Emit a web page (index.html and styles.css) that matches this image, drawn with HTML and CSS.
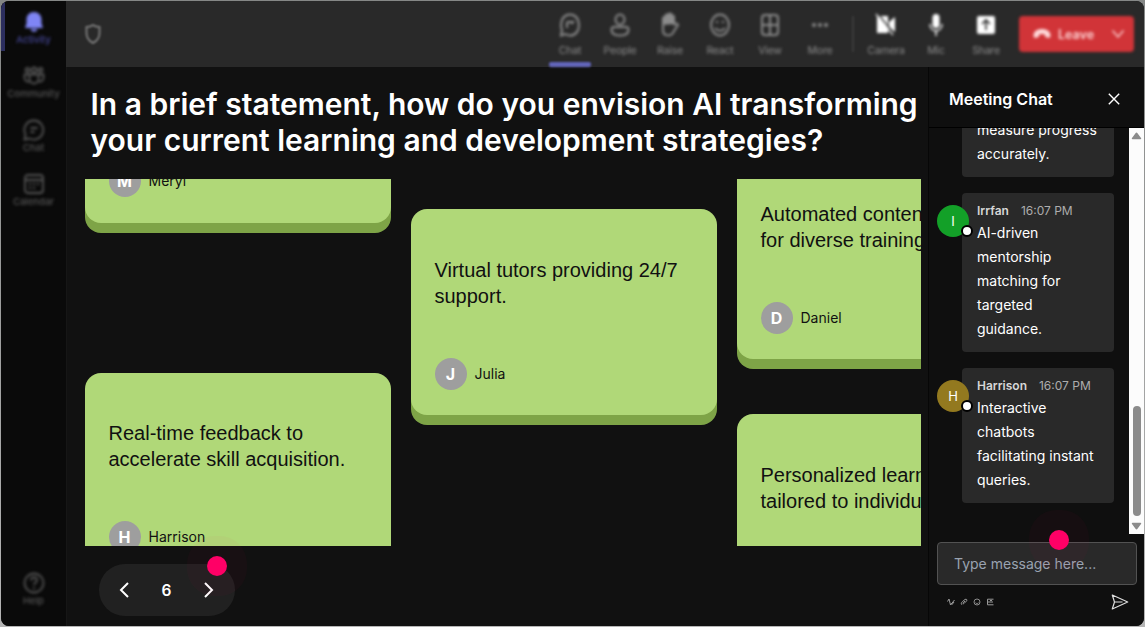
FILE: index.html
```html
<!DOCTYPE html>
<html lang="en">
<head>
    <meta charset="UTF-8">
    <meta name="viewport" content="width=device-width, initial-scale=1.0">
    <title>Meeting</title>
    <link rel="stylesheet" href="styles.css">
</head>
<body>

    <div class="window">
        <nav class="sidebar">
            <div class="side-item active">
                <svg width="22" height="22" viewBox="0 0 22 22"><path fill="currentColor" d="M11 1c-4.300 0-7.500 3.200-7.500 7.500v4L2 17h18l-1.500-4.500v-4C18.500 4.200 15.300 1 11 1zM7.500 18a3.600 3.600 0 0 0 7 0z"/></svg>
                <span>Activity</span>
            </div>
            <div class="side-item">
                <svg width="22" height="22" viewBox="0 0 22 22" fill="none" stroke="currentColor" stroke-width="1.800"><circle cx="4.500" cy="5" r="2"/><circle cx="11" cy="5" r="2.500"/><circle cx="17.500" cy="5" r="2"/><path d="M6.500 9.500h9V14a4.500 4.500 0 0 1-9 0zM6 9.500H1.500V13a4 4 0 0 0 5 3.500M16 9.500h4.500V13a4 4 0 0 1-5 3.500"/></svg>
                <span>Community</span>
            </div>
            <div class="side-item">
                <svg width="22" height="22" viewBox="0 0 22 22" fill="none" stroke="currentColor" stroke-width="1.800"><path d="M11 1.500a9.500 9.500 0 1 1-4.500 18L1.500 20.500l1-5A9.500 9.500 0 0 1 11 1.500zM7.500 9h7M7.500 13h4"/></svg>
                <span>Chat</span>
            </div>
            <div class="side-item">
                <svg width="22" height="22" viewBox="0 0 22 22" fill="none" stroke="currentColor" stroke-width="1.800"><rect x="2" y="2" width="18" height="18" rx="3"/><path d="M2 7h18M6 11h2m2 0h2m2 0h2M6 15h2m2 0h2"/></svg>
                <span>Calendar</span>
            </div>
            <div class="side-item help">
                <svg width="22" height="22" viewBox="0 0 22 22" fill="none" stroke="currentColor" stroke-width="1.800"><circle cx="11" cy="11" r="9.500"/><path d="M8 8.500c0-4 6-4 6 0 0 2-3 2-3 4.500M11 15v2"/></svg>
                <span>Help</span>
            </div>
        </nav>

        <header class="topbar">
            <svg class="shield" width="18" height="22" viewBox="0 0 18 22" fill="none" stroke="currentColor" stroke-width="2"><path d="M9 2c2 1.500 4 2 6.500 2v6c0 5-2.500 8-6.500 10-4-2-6.500-5-6.500-10V4C5 4 7 3.500 9 2z"/></svg>
            <div class="tools">
                <div class="tool selected">
                    <svg width="22" height="26" viewBox="0 0 22 26" fill="none" stroke="currentColor" stroke-width="2"><path d="M11 2.500c5.500 0 9 4.500 9 10.500s-3.500 10.500-9 10.500c-2 0-3-.5-4.500-1.500L2 23.500 3 18c-.6-1.500-1-3-1-5C2 7 5.500 2.500 11 2.500zM8 10h6l-1.500 2M8 10v6"/></svg>
                    <span>Chat</span>
                </div>
                <div class="tool">
                    <svg width="22" height="26" viewBox="0 0 22 26" fill="none" stroke="currentColor" stroke-width="2"><ellipse cx="11" cy="7.500" rx="4.500" ry="5"/><path d="M5 15h12c2 0 2.500 1 2.500 2.500 0 4-3.500 6-8.500 6s-8.500-2-8.500-6C2.500 16 3 15 5 15z"/></svg>
                    <span>People</span>
                </div>
                <div class="tool">
                    <svg width="22" height="26" viewBox="0 0 22 26" stroke="currentColor" stroke-width="2"><path fill="currentColor" d="M4 12V6.500c0-2 2.500-2 2.500 0V4c0-2 3-2 3 0V3c0-2 3-2 3 0v2c0-2 2.500-2 2.500 0v6z"/><path fill="none" d="M4 11v7c0 7 9 7 11 1l4-6c-.5-2-3-2-4 0v-2"/></svg>
                    <span>Raise</span>
                </div>
                <div class="tool">
                    <svg width="22" height="26" viewBox="0 0 22 26" fill="none" stroke="currentColor" stroke-width="2"><ellipse cx="11" cy="13" rx="9" ry="10.500"/><path d="M6 16c2.500 3.500 7.500 3.500 10 0M7 10h2M13 10h2"/></svg>
                    <span>React</span>
                </div>
                <div class="tool">
                    <svg width="22" height="26" viewBox="0 0 22 26" fill="none" stroke="currentColor" stroke-width="2"><rect x="3" y="3" width="16" height="20" rx="3"/><path d="M11 3v20M3 13h16"/></svg>
                    <span>View</span>
                </div>
                <div class="tool">
                    <svg width="22" height="26" viewBox="0 0 22 26" fill="currentColor"><circle cx="5" cy="13" r="2"/><circle cx="11" cy="13" r="2"/><circle cx="17" cy="13" r="2"/></svg>
                    <span>More</span>
                </div>
                <div class="divider"></div>
                <div class="tool device">
                    <svg width="22" height="26" viewBox="0 0 22 26"><path fill="currentColor" d="M2 4h11v17H2zM14 10l6-5v15l-6-5z"/><path stroke="#292929" stroke-width="1.500" d="M3 2l17 21"/><path stroke="currentColor" stroke-width="1.200" d="M1 2l17 21"/></svg>
                    <span>Camera</span>
                </div>
                <div class="tool device">
                    <svg width="22" height="26" viewBox="0 0 22 26"><rect x="7.500" y="2" width="7" height="14" rx="3.500" fill="currentColor"/><path fill="none" stroke="currentColor" stroke-width="1.500" d="M5 12c0 9 12 9 12 0M11 19v5"/></svg>
                    <span>Mic</span>
                </div>
                <div class="tool device">
                    <svg width="22" height="26" viewBox="0 0 22 26"><rect x="2" y="4" width="18" height="18" rx="2" fill="currentColor"/><path fill="none" stroke="#292929" stroke-width="1.600" d="M11 18V8M7 12l4-4 4 4"/></svg>
                    <span>Share</span>
                </div>
            </div>
            <button class="leave">
                <svg width="20" height="12" viewBox="0 0 20 12"><path fill="currentColor" d="M10 1c5 0 8.500 2.500 8.500 6.500 0 2-1 2.700-2.500 2.300l-2-.6c-1-.3-1.200-1-1.200-2.700-2-.7-3.600-.7-5.600 0C7.200 8.200 7 8.900 6 9.200l-2 .6c-1.500.4-2.500-.3-2.500-2.300C1.500 3.500 5 1 10 1z"/></svg>
                <span>Leave</span>
                <svg class="chevron" width="14" height="10" viewBox="0 0 14 10" fill="none" stroke="currentColor" stroke-width="1.300"><path d="M1.500 1.500L7 8l5.500-6.500"/></svg>
            </button>
        </header>

        <main class="stage">
            <h1>In a brief statement, how do you envision AI transforming<br>your current learning and development strategies?</h1>

            <div class="board">
                <div class="column column-left">
                    <div class="card">
                        <p></p>
                        <div class="author"><b>M</b><span>Meryl</span></div>
                    </div>
                    <div class="card">
                        <p>Real-time feedback to accelerate skill acquisition.</p>
                        <div class="author"><b>H</b><span>Harrison</span></div>
                    </div>
                </div>
                <div class="column column-middle">
                    <div class="card">
                        <p>Virtual tutors providing 24/7 support.</p>
                        <div class="author"><b>J</b><span>Julia</span></div>
                    </div>
                </div>
                <div class="column column-right">
                    <div class="card">
                        <p>Automated content<br>for diverse training</p>
                        <div class="author"><b>D</b><span>Daniel</span></div>
                    </div>
                    <div class="card">
                        <p>Personalized learning<br>tailored to individual</p>
                    </div>
                </div>
            </div>

            <div class="pager">
                <svg width="12" height="18" viewBox="0 0 12 18" fill="none" stroke="currentColor" stroke-width="2"><path d="M10 2L3 9l7 7"/></svg>
                <span>6</span>
                <svg width="12" height="18" viewBox="0 0 12 18" fill="none" stroke="currentColor" stroke-width="2"><path d="M2 2l7 7-7 7"/></svg>
                <i class="hotspot"></i>
            </div>
        </main>

        <aside class="chat">
            <div class="chat-header">
                <h2>Meeting Chat</h2>
                <svg width="12" height="12" viewBox="0 0 12 12" stroke="currentColor" stroke-width="1.400"><path d="M.8.8l10.400 10.400M11.200.8L.8 11.200"/></svg>
            </div>
            <div class="chat-body">
                <div class="messages">
                    <div class="message">
                        <div class="bubble">
                            <p>measure progress accurately.</p>
                        </div>
                    </div>
                    <div class="message">
                        <div class="avatar green">I</div>
                        <div class="bubble">
                            <div class="meta"><b>Irrfan</b><time>16:07 PM</time></div>
                            <p>AI-driven mentorship matching for targeted guidance.</p>
                        </div>
                    </div>
                    <div class="message">
                        <div class="avatar gold">H</div>
                        <div class="bubble">
                            <div class="meta"><b>Harrison</b><time>16:07 PM</time></div>
                            <p>Interactive chatbots facilitating instant queries.</p>
                        </div>
                    </div>
                </div>
                <div class="scrollbar">
                    <svg width="11" height="8" viewBox="0 0 11 8"><path fill="#8b8b8b" d="M4.500 1.200a1.200 1.200 0 0 1 2 0L10 6a.7.7 0 0 1-.6 1.200H1.600A.7.7 0 0 1 1 6z"/></svg>
                    <div class="thumb"></div>
                    <svg width="11" height="8" viewBox="0 0 11 8"><path fill="#8b8b8b" d="M4.500 6.800a1.200 1.200 0 0 0 2 0L10 2A.7.7 0 0 0 9.400.8H1.600A.7.7 0 0 0 1 2z"/></svg>
                </div>
            </div>
            <div class="composer">
                <div class="field">
                    <span>Type message here...</span>
                    <i class="hotspot"></i>
                </div>
                <div class="actions">
                    <svg width="8" height="8" viewBox="0 0 8 8" fill="none" stroke="currentColor"><path d="M.5 3.500L2 1l1.500 6L7.500 2M4 5l1 1.500L7 4"/></svg>
                    <svg width="8" height="8" viewBox="0 0 8 8" fill="none" stroke="currentColor"><path d="M2 6.800C.5 6 1.500 4.500 2.500 3.500L5 1.500c1.500-1 2.500.5 1.500 1.500L4 5.500c-1 .6-1.300 0-.8-.6L5 3"/></svg>
                    <svg width="8" height="8" viewBox="0 0 8 8" fill="none" stroke="currentColor" stroke-width=".9"><circle cx="4" cy="4" r="3"/><path d="M2.500 4.800c1 1 2 1 3 0"/></svg>
                    <svg width="8" height="8" viewBox="0 0 8 8" fill="none" stroke="currentColor"><path d="M7.500 1.200h-6v5.600h6M2 4h5M4 2.500h2"/></svg>
                    <svg class="send" width="18" height="16" viewBox="0 0 18 16" fill="none" stroke="currentColor" stroke-width="1.200" stroke-linejoin="round"><path d="M1.300 1L16.700 8 1.300 15l2.200-7zM3.500 8h8"/></svg>
                </div>
            </div>
        </aside>
    </div>

</body>
</html>
```
FILE: styles.css
```css
*, *::after {
    box-sizing: border-box;
}
body {
    margin: 0;
    padding: 1px;
    height: 627px;
    background: linear-gradient(#858786, #b5b5b5);
    font-family: Inter, sans-serif;
    color: #fff;
    overflow: hidden;
}
h1, h2, p {
    margin: 0;
}
svg {
    display: block;
    flex-shrink: 0;
}
.window {
    display: grid;
    grid-template-columns: 65px 862px 216px;
    grid-template-rows: 66px 559px;
    width: 1143px;
    height: 625px;
    border-radius: 8px;
    overflow: hidden;
    background: #111;
}

/* sidebar */
.sidebar {
    grid-row: 1 / 3;
    display: flex;
    flex-direction: column;
    background: #0a0a0a;
    color: #555;
    padding-bottom: 10px;
}
.side-item {
    display: flex;
    flex-direction: column;
    align-items: center;
    height: 54px;
    padding-top: 10px;
    font-size: 9.500px;
    line-height: 13px;
    font-weight: 500;
}
.side-item > * {
    filter: blur(1.5px);
}
.side-item.active {
    color: #454799;
    padding-right: 4px;
    border-left: 4px solid #2c2e5e;
    height: 50px;
    margin-bottom: 4px;
}
.side-item.active svg {
    color: #7f85f5;
}
.side-item.help {
    margin-top: auto;
}

/* top bar */
.topbar {
    grid-column: 2 / 4;
    display: flex;
    align-items: flex-start;
    background: #292929;
    padding: 0 10px 0 18px;
    font-size: 10.500px;
    color: #999;
}
.shield {
    margin-top: 22px;
    color: #777;
    filter: blur(1.3px);
}
.tools {
    display: flex;
    margin-left: auto;
    margin-right: 8px;
}
.tool {
    display: flex;
    flex-direction: column;
    align-items: center;
    width: 50px;
    height: 66px;
    padding-top: 11px;
    gap: 5px;
    line-height: 15px;
    letter-spacing: -0.2px;
    color: #8c8c8c;
}
.tool > * {
    filter: blur(1.6px);
}
.tool.selected::after {
    content: "";
    width: 42px;
    height: 5px;
    margin-top: -1px;
    background: #6265bb;
    border-radius: 2px;
    filter: blur(1px);
}
.tool.device svg {
    color: #fff;
}
.divider {
    width: 2px;
    height: 36px;
    margin: 15px 7px 0;
    background: #3b3b3b;
    filter: blur(1px);
}
.leave {
    display: flex;
    align-items: center;
    width: 115px;
    height: 36px;
    margin-top: 15px;
    padding: 0 9px 0 13px;
    border: 0;
    border-radius: 4px;
    background: #d13438;
    color: #ffd9da;
    font: 600 12.500px Inter, sans-serif;
    filter: blur(1.4px);
}
.leave span {
    margin-left: 6px;
}
.leave .chevron {
    margin-left: auto;
}

/* stage */
.stage {
    padding: 19px 0 0 17.500px;
    border-left: 1px solid #161616;
}
h1 {
    margin-left: 6px;
    font-size: 30px;
    font-weight: 600;
    line-height: 36px;
    white-space: nowrap;
}
.board {
    display: flex;
    gap: 20px;
    width: 836px;
    height: 367px;
    margin-top: 21px;
    overflow: hidden;
}
.column {
    flex: 0 0 306px;
    display: flex;
    flex-direction: column;
}
.column-left {
    margin-top: -162px;
    gap: 140px;
}
.column-middle {
    margin-top: 30px;
}
.column-right {
    margin-top: -26px;
    gap: 45px;
}
.card {
    flex-shrink: 0;
    height: 206px;
    margin-bottom: 10px;
    padding: 48px 24px 0;
    border-radius: 16px;
    background: #b0d878;
    box-shadow: 0 10px 0 #7ea447;
    color: #111;
}
.column-left .card {
    padding-top: 47px;
}
.card p {
    height: 101px;
    font: 20px/26px "Liberation Sans", Arial, sans-serif;
}
.author {
    display: flex;
    align-items: center;
    gap: 8px;
    font-size: 14px;
}
.author span {
    margin-bottom: 2px;
}
.author b {
    width: 32px;
    height: 32px;
    border-radius: 50%;
    background: #9e9e9e;
    color: #fff;
    font-size: 16px;
    line-height: 32px;
    text-align: center;
}
.pager {
    position: relative;
    display: flex;
    align-items: center;
    justify-content: space-between;
    width: 136px;
    height: 52px;
    margin: 18px 0 0 14.500px;
    padding: 0 20px 0 19px;
    border-radius: 26px;
    background: #212121;
    font-size: 15.500px;
    font-weight: 600;
}
.hotspot {
    position: absolute;
    width: 20px;
    height: 20px;
    border-radius: 50%;
    background: #ff0066;
    box-shadow: 0 0 0 20px rgba(255, 0, 102, 0.03);
}
.pager .hotspot {
    top: -8px;
    right: 8px;
}

/* chat panel */
.chat {
    display: flex;
    flex-direction: column;
    background: #0f0f0f;
    border-left: 1px solid #070707;
}
.chat-header {
    display: flex;
    justify-content: space-between;
    align-items: center;
    height: 61px;
    padding: 3px 24px 0 20px;
    border-bottom: 1px solid #000;
}
h2 {
    font-size: 16px;
    font-weight: 600;
}
.chat-body {
    display: flex;
    height: 406px;
}
.messages {
    flex: 1;
    display: flex;
    flex-direction: column;
    justify-content: flex-end;
    gap: 16px;
    padding: 0 15px 31px 8px;
    overflow: hidden;
}
.message {
    display: flex;
    flex-shrink: 0;
}
.bubble {
    width: 152px;
    margin-left: auto;
    padding: 9px 15px 11px 15px;
    border-radius: 4px;
    background: #292929;
}
.bubble p {
    font-size: 14px;
    line-height: 24px;
}
.meta {
    display: flex;
    gap: 12px;
    margin-bottom: 2px;
    font-size: 12px;
    line-height: 17px;
    color: #d6d6d6;
}
.meta b {
    font-weight: 600;
}
.meta time {
    color: #adadad;
}
.avatar {
    position: relative;
    width: 32px;
    height: 32px;
    margin: 12px -8px 0 0;
    border-radius: 50%;
    font-size: 13px;
    line-height: 32px;
    text-align: center;
}
.avatar::after {
    content: "";
    position: absolute;
    right: -4px;
    bottom: 0;
    width: 12px;
    height: 12px;
    border: 2px solid #000;
    border-radius: 50%;
    background: #fff;
}
.green {
    background: #13a028;
}
.gold {
    background: #93791f;
}
.scrollbar {
    display: flex;
    flex-direction: column;
    align-items: center;
    width: 15px;
    padding: 4px 0;
    background: #fcfcfc;
}
.thumb {
    width: 8px;
    height: 110px;
    margin: auto 0 6px;
    border-radius: 4px;
    background: #8b8b8b;
}
.composer {
    padding: 8px 7px 0 8px;
}
.field {
    position: relative;
    display: flex;
    align-items: center;
    height: 43px;
    padding: 0 16px 1px;
    border: 1px solid #525252;
    border-radius: 4px;
    background: #292929;
    color: #9aa3b0;
    font-size: 14px;
}
.field .hotspot {
    top: -13px;
    left: 111px;
}
.actions {
    display: flex;
    align-items: center;
    gap: 5px;
    padding: 9px 8px 0 10px;
    color: #999;
}
.actions .send {
    margin-left: auto;
    color: #ddd;
}
```
